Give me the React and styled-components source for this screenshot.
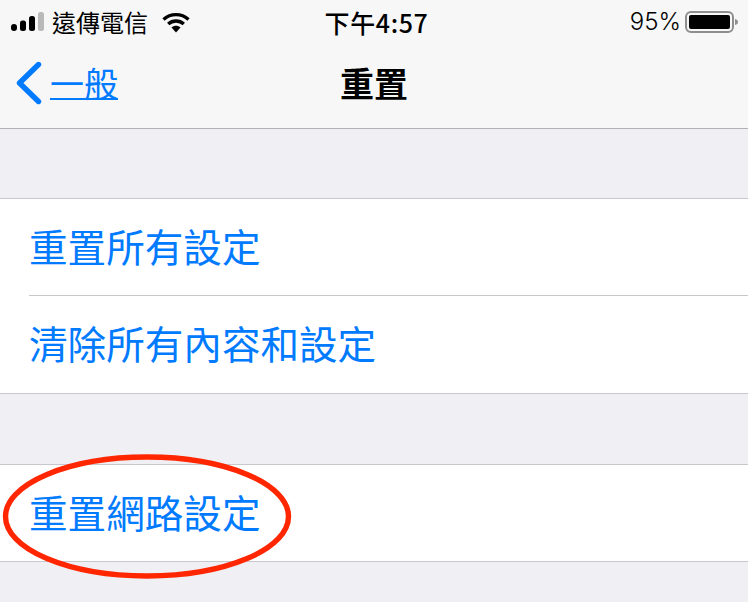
import styled, { createGlobalStyle } from 'styled-components';

const GlobalStyle = createGlobalStyle`
    html, body {
        margin: 0;
        padding: 0;
        background: #EFEFF4;
    }
`;

const fontStack = `"Noto Sans CJK TC", "Noto Sans CJK SC", sans-serif`;

const Page = styled.div`
    position: relative;
    width: 748px;
    height: 602px;
    overflow: hidden;
    background: #EFEFF4;
    font-family: ${fontStack};
`;

const Header = styled.header`
    height: 128px;
    background: #F7F7F7;
    border-bottom: 1px solid #B2B2B2;
`;

const StatusBar = styled.div`
    height: 42px;
    display: grid;
    grid-template-columns: 1fr auto 1fr;
    align-items: center;
    color: #000;
`;

const StatusLeft = styled.div`
    display: flex;
    align-items: center;
    padding-left: 11px;
`;

const StatusRight = styled.div`
    display: flex;
    align-items: center;
    justify-content: flex-end;
    padding-right: 10px;
`;

const Carrier = styled.span`
    font-size: 24px;
    line-height: 42px;
    margin-left: 8px;
    font-weight: 400;
`;

const Clock = styled.span`
    font-size: 25px;
    line-height: 40px;
    font-weight: 500;
    letter-spacing: 0.6px;
    padding-left: 5px;
`;

const Percent = styled.span`
    font-family: Inter, sans-serif;
    font-size: 24px;
    line-height: 44px;
    margin-right: 4px;
    font-weight: 300;
`;

const NavBar = styled.div`
    height: 86px;
    padding-bottom: 4px;
    box-sizing: border-box;
    display: grid;
    grid-template-columns: 1fr auto 1fr;
    align-items: center;
`;

const BackLink = styled.a`
    display: flex;
    align-items: center;
    padding-left: 15px;
    color: #007AFF;
    font-size: 34px;
    font-weight: 400;
    line-height: 46px;
`;

const BackLabel = styled.span`
    margin-left: 8px;
    text-decoration: underline;
    text-decoration-thickness: 2px;
    text-underline-offset: 1px;
`;

const Title = styled.h1`
    margin: 0;
    font-size: 34px;
    line-height: 46px;
    font-weight: 700;
    color: #000;
`;

const Group = styled.section`
    margin-top: ${(p) => p.$gap}px;
    background: #fff;
    border-top: 1px solid #C8C7CC;
    border-bottom: 1px solid #C8C7CC;
`;

const Row = styled.div`
    height: ${(p) => p.$height}px;
    display: flex;
    align-items: center;
    padding: 0 0 5px 29px;
    color: #007AFF;
    font-size: 38.6px;
    font-weight: 400;
    box-sizing: border-box;
    position: relative;
    ${(p) => p.$divided && `
        &::after {
            content: "";
            position: absolute;
            left: 29px;
            right: 0;
            bottom: 0;
            height: 1px;
            background: #C8C7CC;
        }
    `}
`;

const Highlight = styled.svg`
    position: absolute;
    left: 0;
    top: 450px;
`;

function SignalIcon() {
    return (
        <svg width="33" height="20" viewBox="0 0 33 20">
            <rect x="0" y="12" width="6" height="7" rx="3" fill="#000" />
            <rect x="9" y="8.5" width="6" height="10.5" rx="2.5" fill="#000" />
            <rect x="18" y="4" width="6" height="15" rx="2.5" fill="#000" />
            <rect x="27" y="0" width="6" height="19" rx="2.5" fill="#B9B9B9" />
        </svg>
    );
}

function WifiIcon() {
    return (
        <svg width="28" height="21" viewBox="0 0 28 21" style={{ marginLeft: 14 }}>
            <path d="M1.5 7.5C8.5 1 19.5 1 26.5 7.5" fill="none" stroke="#000" strokeWidth="3.4" />
            <path d="M6.2 12C10.6 8 17.4 8 21.8 12" fill="none" stroke="#000" strokeWidth="3.4" />
            <path d="M9.5 15.5C12 13.2 16 13.2 18.5 15.5L14 20.5Z" fill="#000" />
        </svg>
    );
}

function BatteryIcon() {
    return (
        <svg width="53" height="24" viewBox="0 0 53 24">
            <rect x="1" y="2" width="47" height="20" rx="5" fill="none" stroke="#8E8E8E" strokeWidth="2" />
            <rect x="4" y="5" width="41" height="14" rx="2" fill="#000" />
            <path d="M50 9C52 9.5 53 10.5 53 12C53 13.5 52 14.5 50 15Z" fill="#8E8E8E" />
        </svg>
    );
}

function BackChevron() {
    return (
        <svg width="27" height="44" viewBox="0 0 27 44">
            <path d="M23.5 3.5L4.5 22L23.5 40.5" fill="none" stroke="#007AFF" strokeWidth="5.4" strokeLinecap="round" strokeLinejoin="round" />
        </svg>
    );
}

function App() {
    return (
        <Page>
            <GlobalStyle />
            <Header>
                <StatusBar>
                    <StatusLeft>
                        <SignalIcon />
                        <Carrier>遠傳電信</Carrier>
                        <WifiIcon />
                    </StatusLeft>
                    <Clock>下午4:57</Clock>
                    <StatusRight>
                        <Percent>95%</Percent>
                        <BatteryIcon />
                    </StatusRight>
                </StatusBar>
                <NavBar>
                    <BackLink>
                        <BackChevron />
                        <BackLabel>一般</BackLabel>
                    </BackLink>
                    <Title>重置</Title>
                </NavBar>
            </Header>
            <Group $gap={69}>
                <Row $height={97} $divided>重置所有設定</Row>
                <Row $height={97}>清除所有內容和設定</Row>
            </Group>
            <Group $gap={70}>
                <Row $height={96}>重置網路設定</Row>
            </Group>
            <Highlight width="300" height="135" viewBox="0 0 300 135">
                <ellipse cx="147" cy="66.5" rx="141.5" ry="59.5" fill="none" stroke="#FF2600" strokeWidth="5.4" />
            </Highlight>
        </Page>
    );
}

export default App;
